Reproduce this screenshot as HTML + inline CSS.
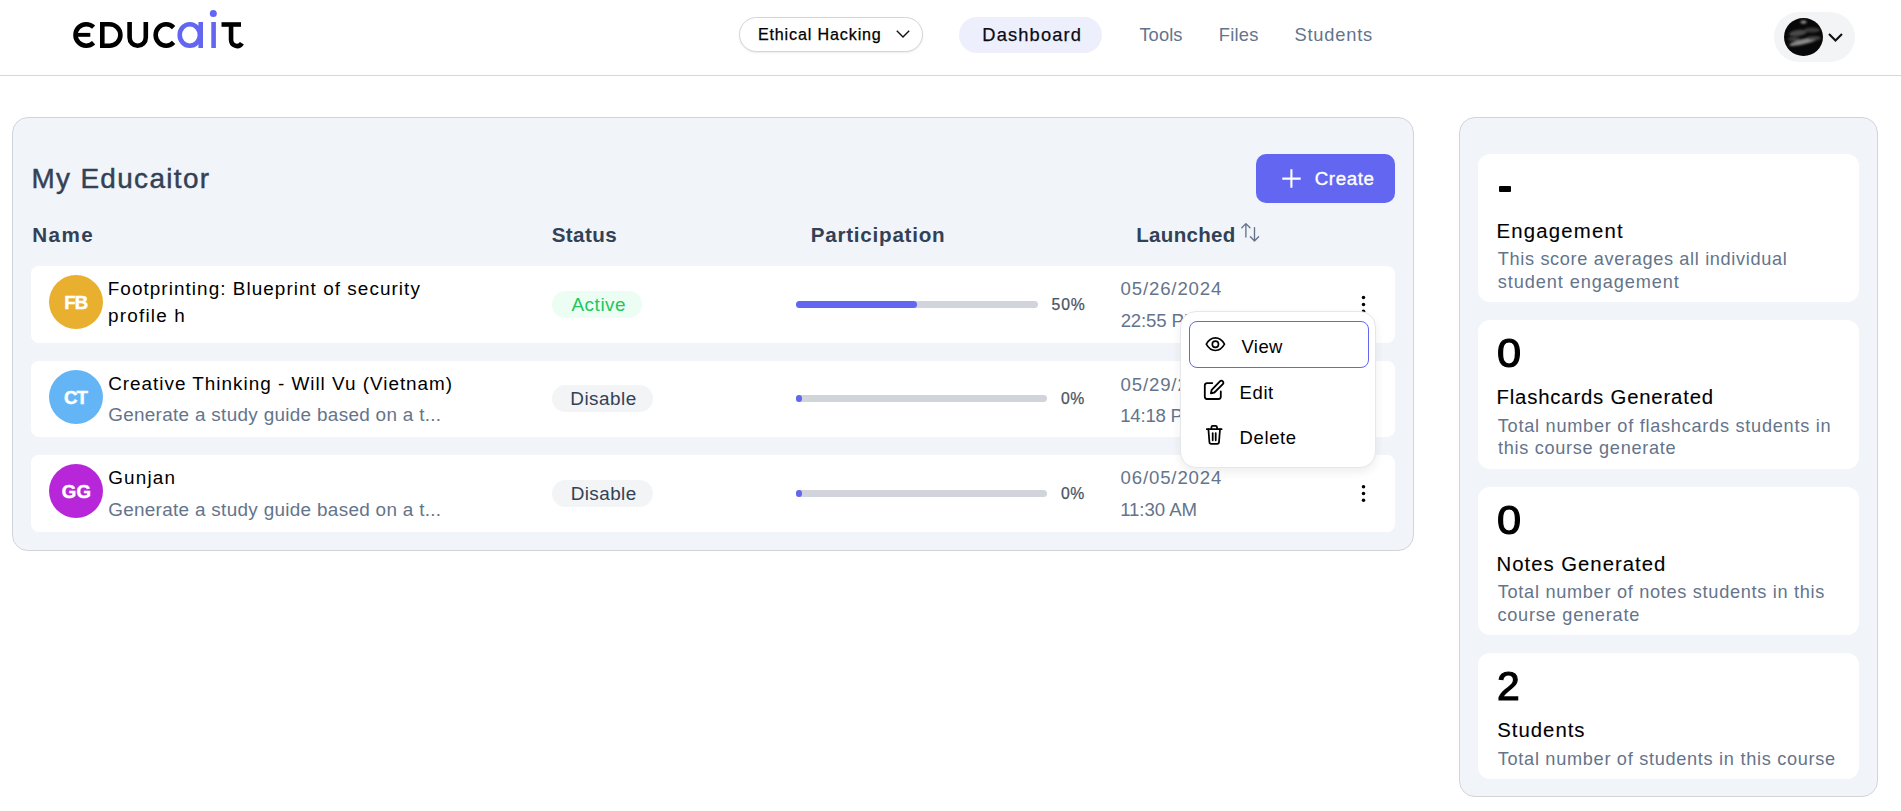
<!DOCTYPE html>
<html><head><meta charset="utf-8">
<style>
html,body{margin:0;padding:0;}
body{width:1901px;height:811px;overflow:hidden;background:#ffffff;position:relative;font-family:"Liberation Sans",sans-serif;}
.b{position:absolute;box-sizing:border-box;}
.t{position:absolute;white-space:nowrap;font-family:"Liberation Sans",sans-serif;}
svg{position:absolute;overflow:visible;}
</style></head><body>
<!-- header -->
<div class="b" style="left:0;top:75px;width:1901px;height:1px;background:#d3d9e0;"></div>
<svg style="left:65px;top:5px;" width="190" height="50" viewBox="0 0 190 50" fill="none">
  <g stroke="#000" stroke-width="4.6">
    <path d="M28.6 22.1 A10.75 10.75 0 1 0 28.6 37.8"/>
    <path d="M37.3 19.3 H44.5 A10.9 10.7 0 0 1 44.5 40.7 H37.3 Z"/>
    <path d="M64.6 17 V32.5 A8.1 8.2 0 0 0 80.8 32.5 V17"/>
    <path d="M108.6 22.6 A10.4 10.75 0 1 0 108.6 37.4"/>
    <path d="M156.5 19.5 H176"/>
    <path d="M166.05 19.5 V34.5 A5.95 6.4 0 0 0 176.9 38.2"/>
  </g>
  <rect x="12.5" y="27.9" width="12.8" height="3.9" fill="#000"/>
  <g stroke="#6366f1" stroke-width="4.6">
    <ellipse cx="124.8" cy="30" rx="10.1" ry="10.7"/>
    <path d="M135.7 17 V43"/>
    <path d="M148.6 17 V43"/>
  </g>
  <circle cx="148.3" cy="8.6" r="3.5" fill="#6366f1"/>
</svg>
<div class="b" style="left:739px;top:17px;width:184px;height:35px;border:1px solid #d1d5db;border-radius:18px;background:#fff;box-shadow:0 1px 2px rgba(0,0,0,0.08);"></div>
<svg style="left:896px;top:30px;" width="14" height="8" viewBox="0 0 14 8" fill="none"><path d="M0.8 0.8 L7 7 L13.2 0.8" stroke="#111" stroke-width="1.4"/></svg>
<div class="b" style="left:959px;top:17px;width:143px;height:36px;border-radius:18px;background:#eeeffd;"></div>
<div class="b" style="left:1774px;top:12px;width:81px;height:50px;border-radius:25px;background:#f3f4f6;"></div>
<svg style="left:1784px;top:18px;" width="39" height="38" viewBox="0 0 39 38">
  <defs><clipPath id="avc"><ellipse cx="19.5" cy="19" rx="19.5" ry="19"/></clipPath>
  <filter id="avb" x="-50%" y="-50%" width="200%" height="200%"><feGaussianBlur stdDeviation="1.2"/></filter></defs>
  <g clip-path="url(#avc)">
    <rect width="39" height="38" fill="#080808"/>
    <g filter="url(#avb)">
      <ellipse cx="20" cy="23.5" rx="15" ry="2.6" fill="#8a8a8a" transform="rotate(-14 20 23.5)"/>
      <ellipse cx="14" cy="15" rx="9" ry="3" fill="#4a4a4a" transform="rotate(-8 14 15)"/>
      <ellipse cx="28" cy="12" rx="8" ry="2.5" fill="#3a3a3a"/>
      <ellipse cx="19.5" cy="4" rx="3" ry="1.6" fill="#9a9a9a"/>
      <ellipse cx="10" cy="21" rx="6" ry="2" fill="#3c3c3c"/>
      <ellipse cx="30" cy="20" rx="7" ry="2" fill="#444"/>
    </g>
  </g>
</svg>
<svg style="left:1828px;top:33px;" width="15" height="9" viewBox="0 0 15 9" fill="none"><path d="M1 1 L7.5 7.5 L14 1" stroke="#111" stroke-width="2.1"/></svg>

<!-- left panel -->
<div class="b" style="left:12px;top:117px;width:1402px;height:434px;border:1px solid #d1d5db;border-radius:16px;background:#f1f4f9;"></div>
<div class="b" style="left:1256px;top:154px;width:139px;height:49px;border-radius:10px;background:#6366f1;"></div>
<svg style="left:1282px;top:169px;" width="19" height="19" viewBox="0 0 19 19" fill="none"><path d="M9.4 0.3 V18.7 M0.3 9.6 H18.7" stroke="#fff" stroke-width="2.1"/></svg>
<svg style="left:1240px;top:222px;" width="21" height="21" viewBox="0 0 21 21" fill="none" stroke="#64748b" stroke-width="1.35" stroke-linecap="round" stroke-linejoin="round">
  <path d="M5.9 15 V1.6 M1.8 5.8 L5.9 1.6 L10 5.8"/>
  <path d="M14.5 5.6 V19 M10.4 14.8 L14.5 19 L18.6 14.8"/>
</svg>

<!-- rows -->
<div class="b" style="left:31px;top:266px;width:1364px;height:77px;border-radius:8px;background:#fff;"></div>
<div class="b" style="left:31px;top:361px;width:1364px;height:76px;border-radius:8px;background:#fff;"></div>
<div class="b" style="left:31px;top:455px;width:1364px;height:77px;border-radius:8px;background:#fff;"></div>

<div class="b" style="left:49px;top:275px;width:54px;height:54px;border-radius:50%;background:#e9af2e;"></div>
<div class="b" style="left:49px;top:370px;width:54px;height:54px;border-radius:50%;background:#64b5f6;"></div>
<div class="b" style="left:49px;top:464px;width:54px;height:54px;border-radius:50%;background:#b727d9;"></div>

<div class="b" style="left:552px;top:291px;width:90px;height:27px;border-radius:14px;background:#ecfdf3;"></div>
<div class="b" style="left:552px;top:385px;width:101px;height:27px;border-radius:14px;background:#f3f4f6;"></div>
<div class="b" style="left:552px;top:480px;width:101px;height:27px;border-radius:14px;background:#f3f4f6;"></div>

<div class="b" style="left:796px;top:301px;width:242px;height:7px;border-radius:4px;background:#d1d5db;"></div>
<div class="b" style="left:796px;top:301px;width:121px;height:7px;border-radius:4px;background:#6366f1;"></div>
<div class="b" style="left:796px;top:395px;width:251px;height:7px;border-radius:4px;background:#d1d5db;"></div>
<div class="b" style="left:796px;top:395px;width:6px;height:7px;border-radius:4px;background:#6366f1;"></div>
<div class="b" style="left:796px;top:490px;width:251px;height:7px;border-radius:4px;background:#d1d5db;"></div>
<div class="b" style="left:796px;top:490px;width:6px;height:7px;border-radius:4px;background:#6366f1;"></div>

<svg style="left:1359px;top:294px;" width="9" height="20" viewBox="0 0 9 20"><circle cx="4.5" cy="3.5" r="1.75" fill="#000"/><circle cx="4.5" cy="10.4" r="1.75" fill="#000"/><circle cx="4.5" cy="17.2" r="1.75" fill="#000"/></svg>
<svg style="left:1359px;top:484px;" width="9" height="20" viewBox="0 0 9 20"><circle cx="4.5" cy="2.65" r="1.75" fill="#000"/><circle cx="4.5" cy="9.5" r="1.75" fill="#000"/><circle cx="4.5" cy="16.2" r="1.75" fill="#000"/></svg>

<!-- right panel -->
<div class="b" style="left:1459px;top:117px;width:419px;height:680px;border:1px solid #d1d5db;border-radius:16px;background:#f1f4f9;"></div>
<div class="b" style="left:1478px;top:154px;width:381px;height:148px;border-radius:12px;background:#fff;"></div>
<div class="b" style="left:1478px;top:320px;width:381px;height:149px;border-radius:12px;background:#fff;"></div>
<div class="b" style="left:1478px;top:487px;width:381px;height:148px;border-radius:12px;background:#fff;"></div>
<div class="b" style="left:1478px;top:653px;width:381px;height:126px;border-radius:12px;background:#fff;"></div>
<div class="b" style="left:1498.5px;top:186.2px;width:12.5px;height:6.2px;border-radius:1px;background:#000;"></div>

<span class="t" style="left:757.88px;top:24.00px;font-size:16.13px;line-height:20px;color:#000000;-webkit-text-stroke:0.25px #000000;letter-spacing:0.852px;">Ethical Hacking</span>
<span class="t" style="left:982.30px;top:23.00px;font-size:18.31px;line-height:23px;color:#0b0b14;-webkit-text-stroke:0.25px #0b0b14;letter-spacing:1.146px;">Dashboard</span>
<span class="t" style="left:1139.39px;top:23.00px;font-size:18.31px;line-height:23px;color:#64748b;letter-spacing:0.089px;">Tools</span>
<span class="t" style="left:1218.80px;top:23.00px;font-size:18.31px;line-height:23px;color:#64748b;letter-spacing:0.256px;">Files</span>
<span class="t" style="left:1294.47px;top:23.00px;font-size:18.31px;line-height:23px;color:#64748b;letter-spacing:0.794px;">Students</span>
<span class="t" style="left:31.41px;top:161.00px;font-size:27.91px;line-height:35px;color:#334155;-webkit-text-stroke:0.45px #334155;letter-spacing:1.345px;">My Educaitor</span>
<span class="t" style="left:32.32px;top:222.00px;font-size:20.64px;line-height:26px;color:#334155;font-weight:700;letter-spacing:1.400px;">Name</span>
<span class="t" style="left:551.71px;top:222.00px;font-size:20.64px;line-height:26px;color:#334155;font-weight:700;letter-spacing:0.379px;">Status</span>
<span class="t" style="left:810.72px;top:222.00px;font-size:20.64px;line-height:26px;color:#334155;font-weight:700;letter-spacing:0.753px;">Participation</span>
<span class="t" style="left:1136.23px;top:222.00px;font-size:20.49px;line-height:26px;color:#334155;font-weight:700;letter-spacing:0.339px;">Launched</span>
<span class="t" style="left:1314.75px;top:167.00px;font-size:18.75px;line-height:23px;color:#ffffff;-webkit-text-stroke:0.35px #ffffff;letter-spacing:0.581px;">Create</span>
<span class="t" style="left:64.16px;top:291.00px;font-size:18.60px;line-height:23px;color:#ffffff;font-weight:700;-webkit-text-stroke:0.50px #ffffff;letter-spacing:-0.707px;">FB</span>
<span class="t" style="left:107.75px;top:277.00px;font-size:18.90px;line-height:24px;color:#000000;letter-spacing:1.057px;">Footprinting: Blueprint of security</span>
<span class="t" style="left:108.08px;top:304.00px;font-size:18.90px;line-height:24px;color:#000000;letter-spacing:1.191px;">profile h</span>
<span class="t" style="left:571.46px;top:293.00px;font-size:18.90px;line-height:24px;color:#22c55e;letter-spacing:0.545px;">Active</span>
<span class="t" style="left:1051.57px;top:295.00px;font-size:15.75px;line-height:20px;color:#4b5563;-webkit-text-stroke:0.25px #4b5563;letter-spacing:0.831px;">50%</span>
<span class="t" style="left:1120.57px;top:277.00px;font-size:18.62px;line-height:23px;color:#64748b;letter-spacing:0.848px;">05/26/2024</span>
<span class="t" style="left:1120.66px;top:309.00px;font-size:18.62px;line-height:23px;color:#64748b;letter-spacing:-0.142px;">22:55 PM</span>
<span class="t" style="left:63.94px;top:386.00px;font-size:18.60px;line-height:23px;color:#ffffff;font-weight:700;-webkit-text-stroke:0.50px #ffffff;letter-spacing:-0.934px;">CT</span>
<span class="t" style="left:108.14px;top:372.00px;font-size:18.90px;line-height:24px;color:#000000;letter-spacing:0.992px;">Creative Thinking - Will Vu (Vietnam)</span>
<span class="t" style="left:108.15px;top:403.00px;font-size:18.90px;line-height:24px;color:#64748b;letter-spacing:0.314px;">Generate a study guide based on a t...</span>
<span class="t" style="left:570.25px;top:387.00px;font-size:18.90px;line-height:24px;color:#334155;letter-spacing:0.498px;">Disable</span>
<span class="t" style="left:1060.88px;top:389.00px;font-size:15.75px;line-height:20px;color:#4b5563;-webkit-text-stroke:0.25px #4b5563;letter-spacing:0.711px;">0%</span>
<span class="t" style="left:1120.57px;top:373.00px;font-size:18.62px;line-height:23px;color:#64748b;letter-spacing:0.848px;">05/29/2024</span>
<span class="t" style="left:1120.18px;top:404.00px;font-size:18.62px;line-height:23px;color:#64748b;letter-spacing:-0.216px;">14:18 PM</span>
<span class="t" style="left:61.64px;top:480.00px;font-size:18.60px;line-height:23px;color:#ffffff;font-weight:700;-webkit-text-stroke:0.50px #ffffff;letter-spacing:0.379px;">GG</span>
<span class="t" style="left:108.15px;top:466.00px;font-size:18.90px;line-height:24px;color:#000000;letter-spacing:1.191px;">Gunjan</span>
<span class="t" style="left:108.15px;top:498.00px;font-size:18.90px;line-height:24px;color:#64748b;letter-spacing:0.314px;">Generate a study guide based on a t...</span>
<span class="t" style="left:570.65px;top:482.00px;font-size:18.90px;line-height:24px;color:#334155;letter-spacing:0.432px;">Disable</span>
<span class="t" style="left:1060.88px;top:484.00px;font-size:15.75px;line-height:20px;color:#4b5563;-webkit-text-stroke:0.25px #4b5563;letter-spacing:0.711px;">0%</span>
<span class="t" style="left:1120.57px;top:466.00px;font-size:18.62px;line-height:23px;color:#64748b;letter-spacing:0.848px;">06/05/2024</span>
<span class="t" style="left:1120.18px;top:498.00px;font-size:18.62px;line-height:23px;color:#64748b;letter-spacing:-0.058px;">11:30 AM</span>
<span class="t" style="left:1496.53px;top:219.00px;font-size:20.35px;line-height:25px;color:#000000;-webkit-text-stroke:0.10px #000000;letter-spacing:1.183px;">Engagement</span>
<span class="t" style="left:1497.79px;top:248.00px;font-size:18.17px;line-height:23px;color:#64748b;letter-spacing:0.651px;">This score averages all individual</span>
<span class="t" style="left:1497.69px;top:271.00px;font-size:18.17px;line-height:23px;color:#64748b;letter-spacing:0.922px;">student engagement</span>
<span class="t" style="left:1497.11px;top:328.00px;font-size:40.10px;line-height:50px;color:#000000;-webkit-text-stroke:1.20px #000000;transform:scaleX(1.0801);transform-origin:0 0;">0</span>
<span class="t" style="left:1496.53px;top:385.00px;font-size:20.35px;line-height:25px;color:#000000;-webkit-text-stroke:0.10px #000000;letter-spacing:0.804px;">Flashcards Generated</span>
<span class="t" style="left:1497.79px;top:415.00px;font-size:18.17px;line-height:23px;color:#64748b;letter-spacing:0.732px;">Total number of flashcards students in</span>
<span class="t" style="left:1497.92px;top:437.00px;font-size:18.17px;line-height:23px;color:#64748b;letter-spacing:0.693px;">this course generate</span>
<span class="t" style="left:1497.11px;top:495.00px;font-size:40.10px;line-height:50px;color:#000000;-webkit-text-stroke:1.20px #000000;transform:scaleX(1.0801);transform-origin:0 0;">0</span>
<span class="t" style="left:1496.53px;top:552.00px;font-size:20.35px;line-height:25px;color:#000000;-webkit-text-stroke:0.10px #000000;letter-spacing:0.989px;">Notes Generated</span>
<span class="t" style="left:1497.79px;top:581.00px;font-size:18.17px;line-height:23px;color:#64748b;letter-spacing:0.700px;">Total number of notes students in this</span>
<span class="t" style="left:1497.43px;top:604.00px;font-size:18.17px;line-height:23px;color:#64748b;letter-spacing:0.761px;">course generate</span>
<span class="t" style="left:1496.75px;top:661.00px;font-size:40.10px;line-height:50px;color:#000000;-webkit-text-stroke:1.20px #000000;transform:scaleX(1.0184);transform-origin:0 0;">2</span>
<span class="t" style="left:1497.28px;top:718.00px;font-size:20.35px;line-height:25px;color:#000000;-webkit-text-stroke:0.10px #000000;letter-spacing:0.992px;">Students</span>
<span class="t" style="left:1497.79px;top:748.00px;font-size:18.17px;line-height:23px;color:#64748b;letter-spacing:0.699px;">Total number of students in this course</span>

<!-- menu -->
<div class="b" style="left:1180px;top:311px;width:196px;height:157px;border:1px solid #e5e7eb;border-radius:16px;background:#fff;box-shadow:0 4px 10px rgba(0,0,0,0.07);"></div>
<div class="b" style="left:1189px;top:321px;width:180px;height:47px;border:1.5px solid #6366f1;border-radius:8px;"></div>
<svg style="left:1204px;top:336px;" width="23" height="18" viewBox="0 0 23 18" fill="none" stroke="#000" stroke-width="1.65">
  <path d="M2.3 8.2 C5 3.3 8.2 1.9 11.4 1.9 C14.6 1.9 17.8 3.3 20.5 8.2 C17.8 13.1 14.6 14.5 11.4 14.5 C8.2 14.5 5 13.1 2.3 8.2 Z"/>
  <circle cx="11.4" cy="8.2" r="3.1"/>
</svg>
<svg style="left:1203px;top:379px;" width="22" height="23" viewBox="0 0 22 23" fill="none" stroke="#000" stroke-width="1.8" stroke-linejoin="round" stroke-linecap="round">
  <path d="M9.3 4.1 H4.0 A2.2 2.2 0 0 0 1.8 6.3 V17.8 A2.2 2.2 0 0 0 4.0 20.0 H15.6 A2.2 2.2 0 0 0 17.8 17.8 V12.4"/>
  <path d="M16.9 2.3 A2.0 2.0 0 0 1 19.8 5.2 L11.4 13.5 L7.9 14.3 L8.7 10.8 Z"/>
</svg>
<svg style="left:1205px;top:425px;" width="19" height="21" viewBox="0 0 19 21" fill="none" stroke="#000" stroke-width="1.75" stroke-linejoin="round" stroke-linecap="round">
  <path d="M1.8 4.2 H16.6"/>
  <path d="M6.4 4.2 V2.3 A1.4 1.4 0 0 1 7.8 0.9 H10.6 A1.4 1.4 0 0 1 12 2.3 V4.2"/>
  <path d="M3.4 4.2 L4.4 17 A1.9 1.9 0 0 0 6.3 18.8 H12.1 A1.9 1.9 0 0 0 14 17 L15 4.2"/>
  <path d="M7.7 8 V15.3 M10.7 8 V15.3"/>
</svg>
<span class="t" style="left:1241.42px;top:335.00px;font-size:18.46px;line-height:23px;color:#000000;letter-spacing:0.465px;">View</span>
<span class="t" style="left:1239.59px;top:381.00px;font-size:18.46px;line-height:23px;color:#000000;letter-spacing:0.623px;">Edit</span>
<span class="t" style="left:1239.59px;top:426.00px;font-size:18.46px;line-height:23px;color:#000000;letter-spacing:0.648px;">Delete</span>
</body></html>
